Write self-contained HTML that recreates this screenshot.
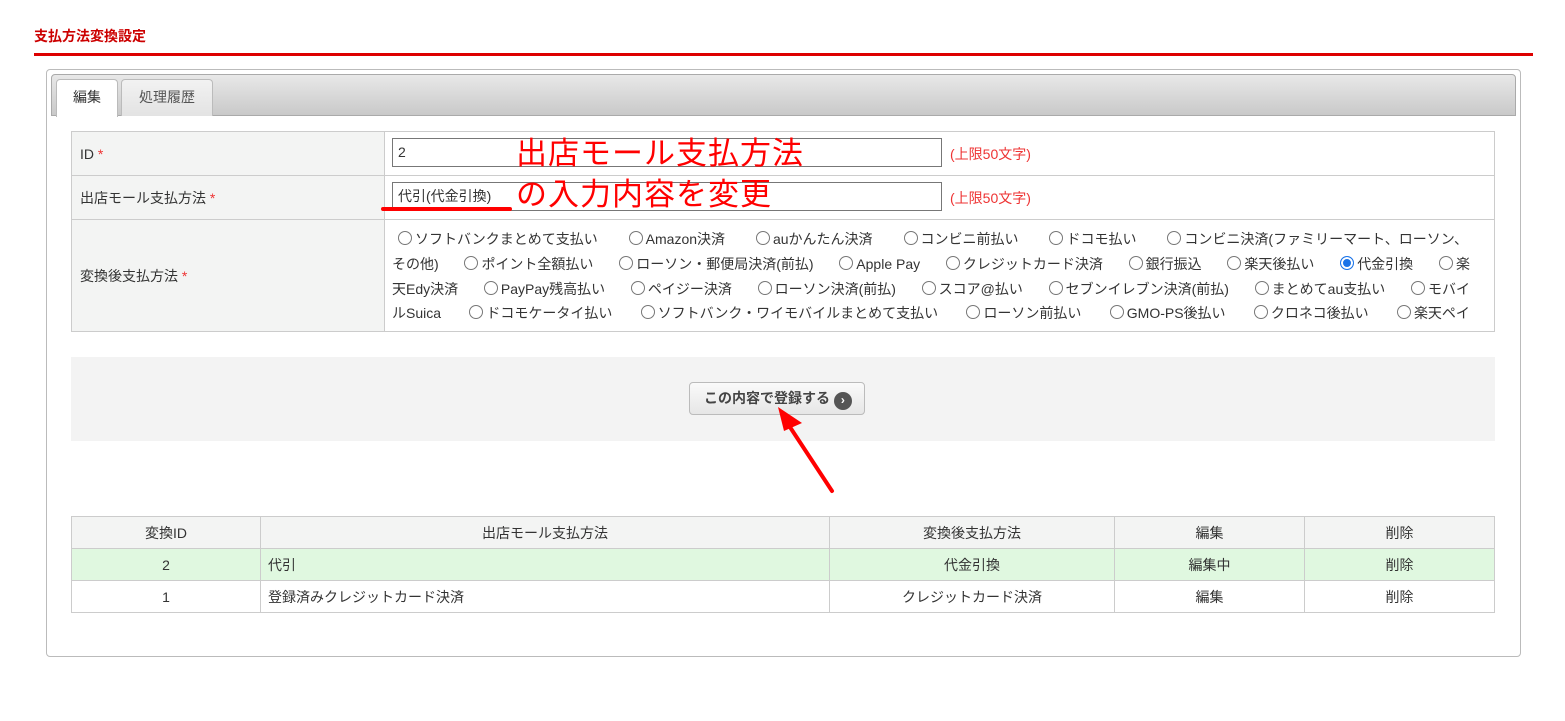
<!DOCTYPE html>
<html><head><meta charset="utf-8"><style>
*{box-sizing:border-box;margin:0;padding:0}
body{width:1565px;height:721px;background:#fff;font-family:"Liberation Sans","Noto Sans CJK JP",sans-serif;font-size:14px;color:#333;position:relative;overflow:hidden}
.a{position:absolute}
.title{left:34px;top:26px;color:#c00;font-weight:bold;font-size:14px}
.rl{left:34px;top:53px;width:1499px;height:3px;background:#d00}
.panel{left:46px;top:69px;width:1475px;height:588px;border:1px solid #bbb;border-radius:4px}
.tabbar{left:51px;top:74px;width:1465px;height:42px;border:1px solid #aaa;border-radius:4px 4px 0 0;background:linear-gradient(#e8e8e8,#c9c9c9)}
.tab{top:79px;height:37px;border:1px solid #bbb;border-bottom:none;border-radius:4px 4px 0 0;text-align:center;line-height:34px;font-size:14px}
table{border-collapse:collapse}
td{border:1px solid #ccc}
.f td.l{background:#f3f4f3;padding-left:8px;width:313px}
.req{color:#e33}
.inp{position:absolute;border:1px solid #777;height:29px;width:550px;padding-left:5px;line-height:27px;font-size:14px;background:#fff}
.lim{position:absolute;color:#e33;font-size:14px}
.rad{position:absolute;left:392px;width:1078px;white-space:nowrap;line-height:25px;display:flex;justify-content:space-between}
.r{display:inline-block;width:14px;height:14px;border:1px solid #777;border-radius:50%;vertical-align:-1px;margin:0 3px 0 0}
.r.on{border:1px solid #1a73e8;box-shadow:inset 0 0 0 2px #fff;background:#1a73e8}
.t td{height:32px;text-align:center;font-size:14px}
.ann{color:#f00;font-size:31px;position:absolute;left:516px;line-height:34px;letter-spacing:1px}
</style></head><body>
<div class="a title">支払方法変換設定</div>
<div class="a rl"></div>
<div class="a panel"></div>
<div class="a tabbar"></div>
<div class="a tab" style="left:56px;width:62px;background:#fff;top:79px;height:38px">編集</div>
<div class="a tab" style="left:121px;width:92px;background:linear-gradient(#f2f2f2,#e3e3e3);color:#555">処理履歴</div>

<table class="a f" style="left:71px;top:131px;width:1424px">
<tr style="height:44px"><td class="l">ID <span class="req">*</span></td><td></td></tr>
<tr style="height:44px"><td class="l">出店モール支払方法 <span class="req">*</span></td><td></td></tr>
<tr style="height:112px"><td class="l">変換後支払方法 <span class="req">*</span></td><td></td></tr>
</table>
<div class="inp" style="left:392px;top:138px;width:550px">2</div>
<div class="inp" style="left:392px;top:182px;width:550px">代引(代金引換)</div>
<div class="lim" style="left:950px;top:144px">(上限50文字)</div>
<div class="lim" style="left:950px;top:188px">(上限50文字)</div>

<div class="rad" style="top:227px;left:398px;width:1070px"><span><span class="r"></span>ソフトバンクまとめて支払い</span><span><span class="r"></span>Amazon決済</span><span><span class="r"></span>auかんたん決済</span><span><span class="r"></span>コンビニ前払い</span><span><span class="r"></span>ドコモ払い</span><span><span class="r"></span>コンビニ決済(ファミリーマート、ローソン、</span></div>
<div class="rad" style="top:252px"><span>その他)</span><span><span class="r"></span>ポイント全額払い</span><span><span class="r"></span>ローソン・郵便局決済(前払)</span><span><span class="r"></span>Apple Pay</span><span><span class="r"></span>クレジットカード決済</span><span><span class="r"></span>銀行振込</span><span><span class="r"></span>楽天後払い</span><span><span class="r on"></span>代金引換</span><span><span class="r"></span>楽</span></div>
<div class="rad" style="top:277px"><span>天Edy決済</span><span><span class="r"></span>PayPay残高払い</span><span><span class="r"></span>ペイジー決済</span><span><span class="r"></span>ローソン決済(前払)</span><span><span class="r"></span>スコア@払い</span><span><span class="r"></span>セブンイレブン決済(前払)</span><span><span class="r"></span>まとめてau支払い</span><span><span class="r"></span>モバイ</span></div>
<div class="rad" style="top:301px"><span>ルSuica</span><span><span class="r"></span>ドコモケータイ払い</span><span><span class="r"></span>ソフトバンク・ワイモバイルまとめて支払い</span><span><span class="r"></span>ローソン前払い</span><span><span class="r"></span>GMO-PS後払い</span><span><span class="r"></span>クロネコ後払い</span><span><span class="r"></span>楽天ペイ</span></div>

<div class="ann" style="top:137px">出店モール支払方法</div>
<div class="ann" style="top:178px">の入力内容を変更</div>
<div class="a" style="left:381px;top:207px;width:131px;height:4px;background:#f00;border-radius:2px"></div>

<div class="a" style="left:71px;top:357px;width:1424px;height:84px;background:#f3f3f3"></div>
<div class="a" style="left:689px;top:382px;width:176px;height:33px;border:1px solid #bbb;border-radius:4px;background:linear-gradient(#fafafa,#e6e6e6);font-weight:bold;color:#444;font-size:14px;line-height:31px;padding-left:14px">この内容で登録する <span style="display:inline-block;width:18px;height:18px;border-radius:50%;background:#555;color:#fff;font-size:12px;line-height:17px;text-align:center;vertical-align:-1px">&#8250;</span></div>
<svg class="a" style="left:760px;top:395px" width="90" height="110"><line x1="72" y1="96" x2="26" y2="26" stroke="#f00" stroke-width="4" stroke-linecap="round"/><polygon points="18,12 42,28 24,36" fill="#f00"/></svg>

<table class="a t" style="left:71px;top:516px;width:1424px">
<tr style="background:#f3f4f3"><td style="width:189px">変換ID</td><td style="width:569px">出店モール支払方法</td><td style="width:285px">変換後支払方法</td><td style="width:190px">編集</td><td>削除</td></tr>
<tr style="background:#e0f8e0"><td>2</td><td style="text-align:left;padding-left:7px">代引</td><td>代金引換</td><td>編集中</td><td>削除</td></tr>
<tr><td>1</td><td style="text-align:left;padding-left:7px">登録済みクレジットカード決済</td><td>クレジットカード決済</td><td>編集</td><td>削除</td></tr>
</table>
</body></html>
